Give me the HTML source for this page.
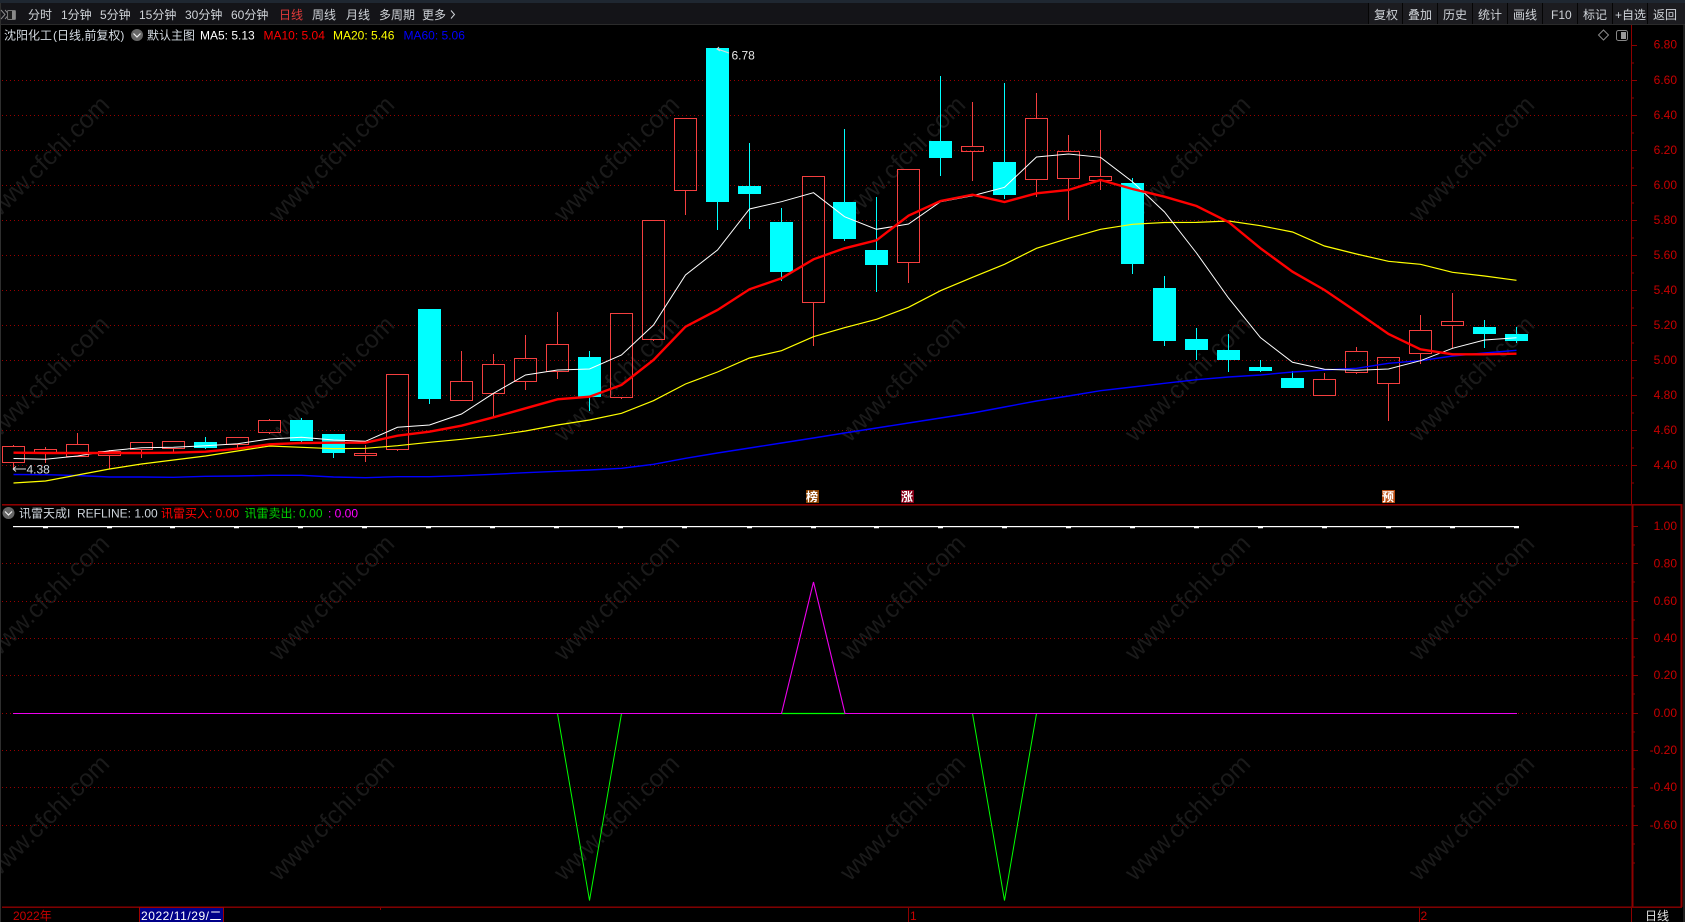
<!DOCTYPE html>
<html lang="zh"><head><meta charset="utf-8"><title>沈阳化工</title>
<style>
html,body{margin:0;padding:0;background:#000;width:1685px;height:922px;overflow:hidden}
svg{display:block;position:absolute;left:0;top:0}
text{font-family:"Liberation Sans","Noto Sans CJK SC",sans-serif;font-size:12px;white-space:pre}
.tb{fill:#cfd3d8}
.ax{fill:#c80000;text-anchor:end}
.wm{font-size:25px;fill:#1a1a1a}
</style></head><body>
<svg width="1685" height="922" viewBox="0 0 1685 922" xmlns="http://www.w3.org/2000/svg">
<rect width="1685" height="922" fill="#000"/>
<!-- watermark -->
<g class="wmg">
<text class="wm" transform="translate(-6 223) rotate(-45)">www.cfchi.com</text>
<text class="wm" transform="translate(279 223) rotate(-45)">www.cfchi.com</text>
<text class="wm" transform="translate(564 223) rotate(-45)">www.cfchi.com</text>
<text class="wm" transform="translate(850 223) rotate(-45)">www.cfchi.com</text>
<text class="wm" transform="translate(1135 223) rotate(-45)">www.cfchi.com</text>
<text class="wm" transform="translate(1419 223) rotate(-45)">www.cfchi.com</text>
<text class="wm" transform="translate(-6 443) rotate(-45)">www.cfchi.com</text>
<text class="wm" transform="translate(279 443) rotate(-45)">www.cfchi.com</text>
<text class="wm" transform="translate(564 443) rotate(-45)">www.cfchi.com</text>
<text class="wm" transform="translate(850 443) rotate(-45)">www.cfchi.com</text>
<text class="wm" transform="translate(1135 443) rotate(-45)">www.cfchi.com</text>
<text class="wm" transform="translate(1419 443) rotate(-45)">www.cfchi.com</text>
<text class="wm" transform="translate(-6 662) rotate(-45)">www.cfchi.com</text>
<text class="wm" transform="translate(279 662) rotate(-45)">www.cfchi.com</text>
<text class="wm" transform="translate(564 662) rotate(-45)">www.cfchi.com</text>
<text class="wm" transform="translate(850 662) rotate(-45)">www.cfchi.com</text>
<text class="wm" transform="translate(1135 662) rotate(-45)">www.cfchi.com</text>
<text class="wm" transform="translate(1419 662) rotate(-45)">www.cfchi.com</text>
<text class="wm" transform="translate(-6 882) rotate(-45)">www.cfchi.com</text>
<text class="wm" transform="translate(279 882) rotate(-45)">www.cfchi.com</text>
<text class="wm" transform="translate(564 882) rotate(-45)">www.cfchi.com</text>
<text class="wm" transform="translate(850 882) rotate(-45)">www.cfchi.com</text>
<text class="wm" transform="translate(1135 882) rotate(-45)">www.cfchi.com</text>
<text class="wm" transform="translate(1419 882) rotate(-45)">www.cfchi.com</text>
</g>
<!-- cover bottom/axis region over watermark -->
<rect x="0" y="907" width="1685" height="15" fill="#000"/>
<rect x="0" y="0" width="1685" height="25" fill="#141418"/>
<rect x="0" y="0" width="1685" height="3" fill="#1f2731"/>
<rect x="0" y="24" width="1685" height="1" fill="#2b2b2b"/>
<rect x="0" y="3" width="1" height="919" fill="#2e2e2e"/>
<!-- top-left icon -->
<path d="M1 10l4 4.5-4 4.5M5 10l4 4.5-4 4.5" fill="none" stroke="#8a8a8a" stroke-width="1"/>
<rect x="7.5" y="10.5" width="8" height="9" rx="1" fill="#1c1c1c" stroke="#777"/>
<rect x="12" y="11" width="3" height="8" fill="#8a8a8a"/>
<!-- toolbar -->
<g class="tb">
<text x="28" y="19">分时</text><text x="61" y="19">1分钟</text><text x="100" y="19">5分钟</text>
<text x="139" y="19">15分钟</text><text x="185" y="19">30分钟</text><text x="231" y="19">60分钟</text>
<text x="279" y="19" style="fill:#e23a3a">日线</text><text x="312" y="19">周线</text><text x="346" y="19">月线</text>
<text x="379" y="19">多周期</text><text x="422" y="19">更多</text>
</g>
<path d="M451 10.5l3.5 4-3.5 4" fill="none" stroke="#cfd3d8"/>
<rect x="1369" y="3" width="316" height="21" fill="#1c1c20"/>
<path d="M1368.5 3V24M1402.5 3V24M1437.5 3V24M1472.5 3V24M1507.5 3V24M1542.5 3V24M1577.5 3V24M1612.5 3V24M1647.5 3V24" stroke="#050505"/>
<g class="tb">
<text x="1374" y="19">复权</text><text x="1408" y="19">叠加</text><text x="1443" y="19">历史</text><text x="1478" y="19">统计</text>
<text x="1513" y="19">画线</text><text x="1551" y="19">F10</text><text x="1583" y="19">标记</text><text x="1615" y="19">+自选</text><text x="1653" y="19">返回</text>
</g>
<!-- info line -->
<text x="4" y="39.5" fill="#d4dbe2">沈阳化工<tspan dx="1">(日线,前复权)</tspan></text>
<circle cx="137" cy="35" r="6" fill="#666"/>
<path d="M133.5 33.5l3.5 3.5 3.5-3.5" fill="none" stroke="#eee" stroke-width="1.2"/>
<text x="147" y="39.5" fill="#d4dbe2">默认主图</text>
<text x="200" y="39.5" fill="#fff">MA5: 5.13</text>
<text x="263.5" y="39.5" fill="#f00">MA10: 5.04</text>
<text x="333" y="39.5" fill="#ff0">MA20: 5.46</text>
<text x="403.5" y="39.5" fill="#00f">MA60: 5.06</text>
<!-- top-right icons -->
<path d="M1603.5 30l5 5-5 5-5-5z" fill="none" stroke="#8a8a8a"/>
<rect x="1616.5" y="30.5" width="11" height="10" rx="2" fill="none" stroke="#888"/>
<rect x="1621" y="32" width="5" height="7" fill="#999"/>
<!-- grid -->
<path d="M2 80.5H1630M2 115.5H1630M2 150.5H1630M2 185.5H1630M2 220.5H1630M2 255.5H1630M2 290.5H1630M2 325.5H1630M2 360.5H1630M2 395.5H1630M2 430.5H1630M2 465.5H1630M2 563.5H1630M2 601.5H1630M2 638.5H1630M2 675.5H1630M2 713.5H1630M2 750.5H1630M2 787.5H1630M2 825.5H1630" stroke="#980000" stroke-dasharray="1 3" fill="none"/>
<!-- candles red -->
<path fill="none" stroke="#f43f3f" stroke-width="1" shape-rendering="crispEdges" d="
M13.5 445V446.5M13.5 462.5V469M2.5 446.5H24.5V462.5H2.5Z
M45.5 447V449.5M45.5 452.5V463M34.5 449.5H56.5V452.5H34.5Z
M77.5 433V444.5M66.5 444.5H88.5V456.5H66.5Z
M109.5 450V451.5M109.5 455.5V469M98.5 451.5H120.5V455.5H98.5Z
M141.5 449.5V458M130.5 442.5H152.5V449.5H130.5Z
M173.5 448.5V453M162.5 441.5H184.5V448.5H162.5Z
M237.5 444.5V449M226.5 437.5H248.5V444.5H226.5Z
M269.5 419V420.5M269.5 432.5V434M258.5 420.5H280.5V432.5H258.5Z
M365.5 445V453.5M365.5 455.5V462M354.5 453.5H376.5V455.5H354.5Z
M397.5 449.5V451M386.5 374.5H408.5V449.5H386.5Z
M461.5 351V381.5M450.5 381.5H472.5V400.5H450.5Z
M493.5 354V364.5M493.5 393.5V417M482.5 364.5H504.5V393.5H482.5Z
M525.5 335V358.5M525.5 381.5V390M514.5 358.5H536.5V381.5H514.5Z
M557.5 312V344.5M557.5 371.5V379M546.5 344.5H568.5V371.5H546.5Z
M621.5 397.5V399M610.5 313.5H632.5V397.5H610.5Z
M653.5 339.5V341M642.5 220.5H664.5V339.5H642.5Z
M685.5 190.5V215M674.5 118.5H696.5V190.5H674.5Z
M813.5 302.5V346M802.5 176.5H824.5V302.5H802.5Z
M908.5 262.5V283M897.5 169.5H919.5V262.5H897.5Z
M972.5 102V146.5M972.5 151.5V181M961.5 146.5H983.5V151.5H961.5Z
M1036.5 93V118.5M1036.5 179.5V197M1025.5 118.5H1047.5V179.5H1025.5Z
M1068.5 135V151.5M1068.5 178.5V220M1057.5 151.5H1079.5V178.5H1057.5Z
M1100.5 130V176.5M1100.5 180.5V190M1089.5 176.5H1111.5V180.5H1089.5Z
M1324.5 373V379.5M1313.5 379.5H1335.5V395.5H1313.5Z
M1356.5 347V351.5M1356.5 372.5V374M1345.5 351.5H1367.5V372.5H1345.5Z
M1388.5 383.5V421M1377.5 357.5H1399.5V383.5H1377.5Z
M1420.5 315V330.5M1420.5 353.5V364M1409.5 330.5H1431.5V353.5H1409.5Z
M1452.5 293V321.5M1452.5 325.5V348M1441.5 321.5H1463.5V325.5H1441.5Z"/>
<!-- candles cyan -->
<path fill="none" stroke="#0ff" stroke-width="1" shape-rendering="crispEdges" d="M205.5 437V449M301.5 418V442M333.5 434V458M429.5 309V404M589.5 351V411M717.5 48V230M749.5 143V229M781.5 208V281M844.5 129V241M876.5 197V292M940.5 76V176M1004.5 83V199M1132.5 178V274M1164.5 276V346M1196.5 328V360M1228.5 334V372M1260.5 360V372M1292.5 371V388M1484.5 320V348M1516.5 327V343"/>
<g fill="#0ff" shape-rendering="crispEdges">
<rect x="194" y="442" width="23" height="6"/>
<rect x="290" y="420" width="23" height="21"/>
<rect x="322" y="434" width="23" height="19"/>
<rect x="418" y="309" width="23" height="90"/>
<rect x="578" y="357" width="23" height="40"/>
<rect x="706" y="48" width="23" height="154"/>
<rect x="738" y="186" width="23" height="8"/>
<rect x="770" y="222" width="23" height="50"/>
<rect x="833" y="202" width="23" height="37"/>
<rect x="865" y="250" width="23" height="15"/>
<rect x="929" y="141" width="23" height="17"/>
<rect x="993" y="162" width="23" height="33"/>
<rect x="1121" y="183" width="23" height="81"/>
<rect x="1153" y="288" width="23" height="53"/>
<rect x="1185" y="339" width="23" height="11"/>
<rect x="1217" y="350" width="23" height="10"/>
<rect x="1249" y="367" width="23" height="4"/>
<rect x="1281" y="378" width="23" height="10"/>
<rect x="1473" y="327" width="23" height="7"/>
<rect x="1505" y="334" width="23" height="7"/>
</g>
<!-- MA60 -->
<polyline fill="none" stroke="#0000ff" stroke-width="1.4" points="13.5,474.5 45.5,474.7 77.5,475.5 109.5,477 141.5,477 173.5,477.3 205.5,476.3 237.5,476 269.5,475.3 301.5,475.3 333.5,477 365.5,477.7 397.5,476.7 429.5,476.7 461.5,475.7 493.5,474.3 525.5,472.7 557.5,471.3 589.5,470 621.5,468.3 653.5,464.3 685.5,458.3 717.5,453 749.5,448 781.5,443 813.5,438 844.5,433 876.5,428 908.5,423 940.5,418 972.5,413 1004.5,407 1036.5,401 1068.5,396 1100.5,390.7 1132.5,387 1164.5,383.3 1196.5,379.7 1228.5,377 1260.5,375 1292.5,372 1324.5,370 1356.5,368.3 1388.5,363.3 1420.5,360.7 1452.5,356 1484.5,353 1516.5,350.3"/>
<!-- MA20 -->
<polyline fill="none" stroke="#ffff00" stroke-width="1.2" points="13.5,483 45.5,481 77.5,475 109.5,469 141.5,464 173.5,460 205.5,456 237.5,451 269.5,446 301.5,447.3 333.5,448.7 365.5,448.3 397.5,445.7 429.5,442.3 461.5,439.3 493.5,435.7 525.5,431 557.5,425 589.5,420 621.5,413.3 653.5,400.7 685.5,384 717.5,372 749.5,358 781.5,350.7 813.5,336.7 844.5,327.7 876.5,319.3 908.5,307.3 940.5,290.7 972.5,277.3 1004.5,264.3 1036.5,248.3 1068.5,238.3 1100.5,229.3 1132.5,224.3 1164.5,222.5 1196.5,222.4 1228.5,221 1260.5,225.7 1292.5,232 1324.5,246 1356.5,254 1388.5,261.3 1420.5,264.3 1452.5,272.3 1484.5,276 1516.5,280.3"/>
<!-- MA5 -->
<polyline fill="none" stroke="#ffffff" stroke-width="1" points="13.5,458.5 45.5,459.3 77.5,456 109.5,450.7 141.5,447.7 173.5,447.3 205.5,445.7 237.5,443.7 269.5,439 301.5,437.3 333.5,440 365.5,441.3 397.5,427.3 429.5,425 461.5,414 493.5,393.3 525.5,375 557.5,370 589.5,369 621.5,355 653.5,325 685.5,275 717.5,250 749.5,209 781.5,201.7 813.5,192.7 844.5,216.7 876.5,229.3 908.5,224 940.5,201.7 972.5,195.7 1004.5,187.3 1036.5,157 1068.5,154 1100.5,157.3 1132.5,181.7 1164.5,212 1196.5,253 1228.5,298 1260.5,337.7 1292.5,362.3 1324.5,369.3 1356.5,370.3 1388.5,369 1420.5,360.7 1452.5,348.3 1484.5,340 1516.5,337.7"/>
<!-- MA10 -->
<polyline fill="none" stroke="#ff0000" stroke-width="2.4" points="13.5,452.7 45.5,453 77.5,453 109.5,453 141.5,453 173.5,452.7 205.5,451.7 237.5,448.7 269.5,444.3 301.5,443 333.5,442.7 365.5,442.7 397.5,435.7 429.5,431.7 461.5,425.7 493.5,417.3 525.5,408.3 557.5,399.3 589.5,396.7 621.5,385 653.5,360 685.5,326.7 717.5,310 749.5,289.3 781.5,278.3 813.5,259.3 844.5,248.3 876.5,240.3 908.5,215.7 940.5,201 972.5,194.7 1004.5,202 1036.5,193.3 1068.5,190 1100.5,180 1132.5,189 1164.5,196.7 1196.5,206 1228.5,222 1260.5,248.3 1292.5,271.7 1324.5,290 1356.5,311.7 1388.5,334 1420.5,349.3 1452.5,354.3 1484.5,354.3 1516.5,353.7"/>
<!-- annotations -->
<path d="M717.5 49L729 53" stroke="#ddd" fill="none"/>
<path d="M719 47l-2 2 3 2" stroke="#ddd" fill="none"/>
<text x="731.5" y="59.5" fill="#e6e6e6">6.78</text>
<text x="26.5" y="473.5" fill="#d4dbe2">4.38</text>
<path d="M13 469H26M13 469l3-2.5M13 469l3 2.5" stroke="#ddd" fill="none"/>
<!-- markers -->
<rect x="806" y="490" width="13" height="13" fill="#8a4200"/>
<text x="806" y="501" fill="#fff" font-weight="bold">榜</text>
<rect x="901" y="490" width="13" height="13" fill="#860018"/>
<text x="901" y="501" fill="#fff" font-weight="bold">涨</text>
<rect x="1382" y="490" width="13" height="13" fill="#b84a10"/>
<text x="1382" y="501" fill="#fff" font-weight="bold">预</text>
<!-- pane separator -->
<rect x="2" y="504" width="1680" height="1.6" fill="#8c0000"/>
<!-- sub header -->
<circle cx="8.5" cy="513" r="6" fill="#666"/>
<path d="M5 511.5l3.5 3.5 3.5-3.5" fill="none" stroke="#eee" stroke-width="1.2"/>
<text x="19" y="517.5" fill="#cfd6dd">讯雷天成I</text>
<text x="77" y="517.5" fill="#cfd6dd">REFLINE: 1.00</text>
<text x="161" y="517.5" fill="#f00">讯雷买入: 0.00</text>
<text x="244.5" y="517.5" fill="#00d000">讯雷卖出: 0.00</text>
<text x="328" y="517.5" fill="#f0f">: 0.00</text>
<!-- sub chart -->
<rect x="13" y="526" width="1506" height="1.2" fill="#fff"/>
<path fill="#fff" d="M43 527h5v1.2h-5zM107 527h5v1.2h-5zM170 527h5v1.2h-5zM234 527h5v1.2h-5zM298 527h5v1.2h-5zM362 527h5v1.2h-5zM426 527h5v1.2h-5zM490 527h5v1.2h-5zM554 527h5v1.2h-5zM618 527h5v1.2h-5zM682 527h5v1.2h-5zM747 527h5v1.2h-5zM811 527h5v1.2h-5zM874 527h5v1.2h-5zM938 527h5v1.2h-5zM1002 527h5v1.2h-5zM1066 527h5v1.2h-5zM1130 527h5v1.2h-5zM1194 527h5v1.2h-5zM1258 527h5v1.2h-5zM1322 527h5v1.2h-5zM1386 527h5v1.2h-5zM1450 527h5v1.2h-5zM1514 527h5v1.2h-5z"/>
<path d="M557.5 713.5L589.5 900.5L621.5 713.5M972.5 713.5L1004.5 900.5L1036.5 713.5" fill="none" stroke="#00ff00" stroke-width="1"/>
<path d="M781.5 713.5H845" fill="none" stroke="#00ff00" stroke-width="1.2"/>
<path d="M13 713.5H781.5L813.5 582L845 713.5H1517" fill="none" stroke="#ee00ee" stroke-width="1.1"/>
<!-- axis lines -->
<rect x="1631" y="25" width="1" height="480" fill="#8c0000"/>
<rect x="1631.5" y="504" width="2" height="403" fill="#8c0000"/>
<rect x="1680.5" y="504" width="2" height="403" fill="#8c0000"/>
<rect x="2" y="906.5" width="1680" height="1.4" fill="#8c0000"/>
<rect x="1683" y="25" width="2" height="897" fill="#1e1e1e"/>
<path fill="none" stroke="#8c0000" d="M1632 45.5h5M1632 80.5h5M1632 115.5h5M1632 150.5h5M1632 185.5h5M1632 220.5h5M1632 255.5h5M1632 290.5h5M1632 325.5h5M1632 360.5h5M1632 395.5h5M1632 430.5h5M1632 465.5h5M1632 63h2M1632 98h2M1632 133h2M1632 168h2M1632 203h2M1632 238h2M1632 273h2M1632 308h2M1632 343h2M1632 378h2M1632 413h2M1632 448h2M1632 483h2M1633 526.5h5M1633 563.5h5M1633 601.5h5M1633 638.5h5M1633 675.5h5M1633 713.5h5M1633 750.5h5M1633 787.5h5M1633 825.5h5M1633 545h2M1633 582h2M1633 620h2M1633 657h2M1633 694h2M1633 732h2M1633 769h2M1633 806h2M1633 844h2M1633 863h2"/>
<!-- axis labels -->
<g class="ax">
<text x="1677" y="48.5">6.80</text><text x="1677" y="84">6.60</text><text x="1677" y="119">6.40</text><text x="1677" y="154">6.20</text>
<text x="1677" y="189">6.00</text><text x="1677" y="224">5.80</text><text x="1677" y="259">5.60</text><text x="1677" y="294">5.40</text>
<text x="1677" y="329">5.20</text><text x="1677" y="364">5.00</text><text x="1677" y="399">4.80</text><text x="1677" y="434">4.60</text><text x="1677" y="469">4.40</text>
<text x="1677" y="530">1.00</text><text x="1677" y="567.5">0.80</text><text x="1677" y="605">0.60</text><text x="1677" y="642">0.40</text>
<text x="1677" y="679">0.20</text><text x="1677" y="717">0.00</text><text x="1677" y="754">-0.20</text><text x="1677" y="791">-0.40</text><text x="1677" y="829">-0.60</text>
</g>
<!-- bottom bar -->
<text x="13" y="920" fill="#c80000">2022年</text>
<rect x="139.5" y="907.5" width="84" height="15" fill="#000088" stroke="#a00000"/>
<text x="141" y="920" fill="#fff" letter-spacing=".55">2022/11/29/二</text>
<path d="M380.5 908v2M908.5 908v14M1419.5 908v14M1631.5 908v14" stroke="#8c0000" fill="none"/>
<text x="910" y="920" fill="#c80000">1</text>
<text x="1420.5" y="920" fill="#c80000">2</text>
<text x="1645" y="920" fill="#e0e0e0">日线</text>
</svg>
</body></html>
